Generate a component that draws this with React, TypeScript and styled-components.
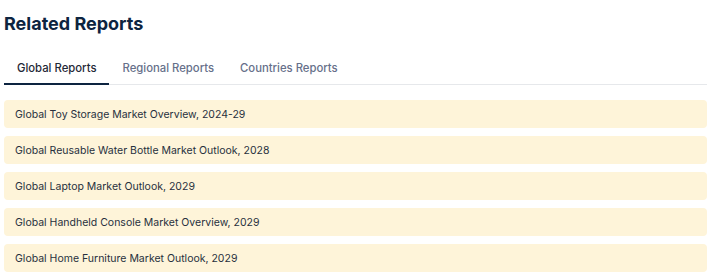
import React, { useState } from "react"
import styled, { createGlobalStyle } from "styled-components"

const GlobalStyle = createGlobalStyle`
  body {
    margin: 0;
    background: #ffffff;
    font-family: Inter, "Noto Sans", sans-serif;
  }
`

const Section = styled.section`
  padding: 12px 7px 0 4px;
`

const Title = styled.h2`
  margin: 0 0 15px 0;
  font-size: 18px;
  line-height: 24px;
  font-weight: 700;
  color: #0d2440;
`

const TabList = styled.div`
  display: flex;
  border-bottom: 1px solid #e6e8eb;
  margin-bottom: 15px;
`

const Tab = styled.button<{ $active?: boolean }>`
  appearance: none;
  background: none;
  border: none;
  border-bottom: 2px solid ${p => (p.$active ? "#0d2440" : "transparent")};
  margin-bottom: -1px;
  padding: 9px 13px 7px 13px;
  font-family: inherit;
  font-size: 11.3px;
  line-height: 16px;
  font-weight: 500;
  color: ${p => (p.$active ? "#1f2937" : "#66708a")};
  cursor: pointer;
`

const ReportList = styled.ul`
  list-style: none;
  margin: 0;
  padding: 0;
  display: flex;
  flex-direction: column;
  gap: 8px;
`

const ReportItem = styled.li`
  display: flex;
  align-items: center;
  height: 28px;
  padding: 0 11px;
  background: #fef4d9;
  border-radius: 4px;
  font-size: 10.5px;
  color: #27303d;
`

const TABS = ["Global Reports", "Regional Reports", "Countries Reports"]

const REPORTS = [
  "Global Toy Storage Market Overview, 2024-29",
  "Global Reusable Water Bottle Market Outlook, 2028",
  "Global Laptop Market Outlook, 2029",
  "Global Handheld Console Market Overview, 2029",
  "Global Home Furniture Market Outlook, 2029",
]

export default function App() {
  const [tab, setTab] = useState(0)

  return (
    <Section>
      <GlobalStyle />
      <Title>Related Reports</Title>
      <TabList>
        {TABS.map((label, i) => (
          <Tab key={label} $active={i === tab} onClick={() => setTab(i)}>
            {label}
          </Tab>
        ))}
      </TabList>
      <ReportList>
        {REPORTS.map(r => (
          <ReportItem key={r}>{r}</ReportItem>
        ))}
      </ReportList>
    </Section>
  )
}
